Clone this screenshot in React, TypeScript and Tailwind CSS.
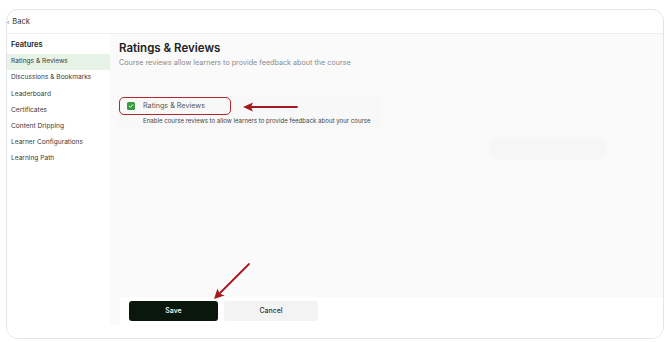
import React from 'react';

const items = [
  'Ratings & Reviews',
  'Discussions & Bookmarks',
  'Leaderboard',
  'Certificates',
  'Content Dripping',
  'Learner Configurations',
  'Learning Path',
];

export default function App() {
  return (
    <div className="h-[342px] w-[670px] overflow-hidden bg-white px-[6px] pt-[9px]" style={{ fontFamily: 'Inter, "Liberation Sans", sans-serif' }}>
      <div className="relative flex h-[330px] w-[658px] flex-col overflow-hidden rounded-[12px] border border-[#e3e5ea] bg-white">
        {/* header */}
        <div className="flex h-[24px] shrink-0 items-center border-b border-[#eceef1] pl-[0px]">
          <span className="text-[6px] leading-none text-[#555]">‹</span>
          <span className="ml-[3px] text-[7.5px] text-[#333]">Back</span>
        </div>

        <div className="flex flex-1">
          {/* sidebar */}
          <div className="w-[103px] shrink-0 bg-white pt-[6px]">
            <div className="px-[4px] text-[7.5px] font-semibold leading-[10px] text-[#1f1f1f]">Features</div>
            <div className="mt-[4px] flex flex-col">
              {items.map((item, i) => (
                <div
                  key={item}
                  className={`flex h-[16.2px] items-center px-[4px] text-[6.6px] text-[#3a3a3a] ${i === 0 ? 'bg-[#e7f3e6]' : ''}`}
                >
                  {item}
                </div>
              ))}
            </div>
          </div>

          {/* main */}
          <div className="relative flex flex-1 flex-col bg-[#fafafa]">
            <div className="flex-1 pl-[9px] pt-[7px]">
              <h1 className="text-[11.5px] font-semibold leading-[14px] text-[#222]">Ratings &amp; Reviews</h1>
              <p className="mt-[3px] text-[7.2px] leading-[10px] text-[#8a8a8a]">
                Course reviews allow learners to provide feedback about the course
              </p>

              <div className="-ml-[2px] mt-[27px] h-[33px] w-[264px] rounded-[3px] bg-[#f8f8f8] pl-[2px] pt-[2px]">
                <div className="flex h-[18px] w-[112px] items-center gap-[8px] rounded-[5px] border-[1.5px] border-[#b3262c] pl-[7px]">
                  <span className="flex h-[8px] w-[8px] items-center justify-center rounded-[1.5px] bg-[#3a9a3f]">
                    <svg viewBox="0 0 10 10" className="h-[6px] w-[6px]">
                      <path d="M2 5.2l2 2 4-4.4" fill="none" stroke="white" strokeWidth="1.6" strokeLinecap="round" strokeLinejoin="round" />
                    </svg>
                  </span>
                  <span className="text-[7.2px] text-[#555]">Ratings &amp; Reviews</span>
                </div>
                <p className="mt-[1px] pl-[24px] text-[6.1px] leading-[9px] text-[#444]">
                  Enable course reviews to allow learners to provide feedback about your course
                </p>
              </div>
            </div>

            {/* footer */}
            <div className="ml-[10px] flex h-[28px] shrink-0 items-center gap-[6px] bg-white pl-[9px]">
              <button className="h-[20px] w-[89px] rounded-[3px] bg-[#0a170d] text-[7px] font-medium text-white">Save</button>
              <button className="h-[20px] w-[94px] rounded-[3px] bg-[#f3f3f3] text-[7px] font-medium text-[#333]">Cancel</button>
            </div>

            {/* faint placeholder */}
            <div className="absolute left-[380px] top-[105px] h-[20px] w-[115px] rounded-[4px] bg-[#f6f6f6] blur-[1px]" />
          </div>
        </div>
        <div className="h-[13px] shrink-0 bg-white" />

        {/* annotation arrows */}
        <svg className="pointer-events-none absolute left-0 top-0" width="658" height="330" viewBox="0 0 658 330">
          <g stroke="#a8191f" strokeWidth="1.8" fill="none" strokeLinecap="round">
            <line x1="290" y1="97" x2="243" y2="97" />
          </g>
          <path d="M236 97 L246 92.5 L244 97 L246 101.5 Z" fill="#a8191f" />
          <g stroke="#a8191f" strokeWidth="1.8" fill="none" strokeLinecap="round">
            <line x1="242" y1="254" x2="212" y2="284" />
          </g>
          <path d="M207 289 L210.5 278.5 L212.5 283.5 L217.5 285.5 Z" fill="#a8191f" />
        </svg>
      </div>
    </div>
  );
}
